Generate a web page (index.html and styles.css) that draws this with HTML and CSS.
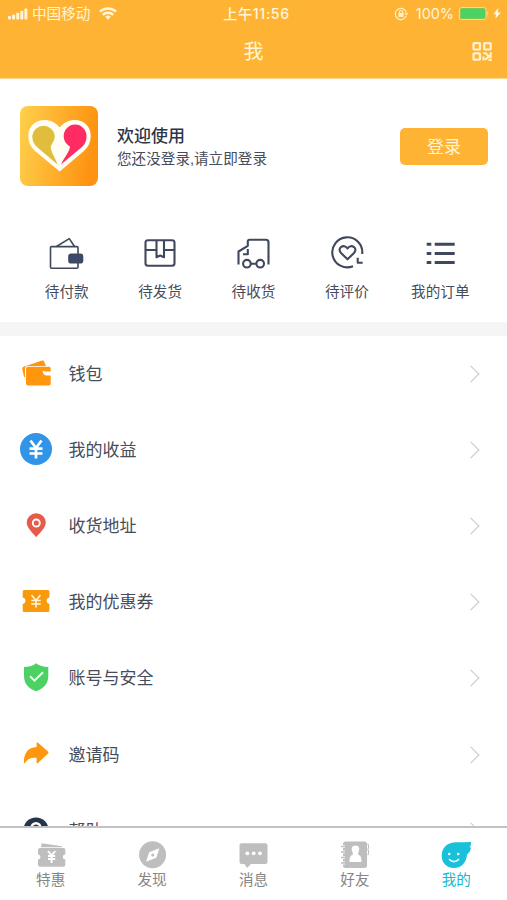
FILE: index.html
```html
<!DOCTYPE html>
<html lang="zh-CN">
<head>
<meta charset="utf-8">
<title>我</title>
<link rel="stylesheet" href="styles.css">
</head>
<body>
<div class="app">
  <header class="header">
    <div class="status">
      <div class="status-left">
        <svg width="20" height="12" viewBox="0 0 20 12" fill="#fff6d8"><rect y="8" width="3" height="3.5" rx="1"/><rect x="4.1" y="6.5" width="3" height="5" rx="1"/><rect x="8.2" y="4.8" width="3" height="6.7" rx="1"/><rect x="12.3" y="2.8" width="3" height="8.7" rx="1"/><rect x="16.4" y="0.5" width="3" height="11" rx="1"/></svg>
        <span class="carrier">中国移动</span>
        <svg width="18" height="13" viewBox="0 0 18 13" fill="none" stroke="#fff6d8" stroke-width="2.5"><path d="M1 4.7a11.5 11.5 0 0 1 16 0M3.8 7.9a7.5 7.5 0 0 1 10.4 0"/><path d="M9 12.8l-2.8-3a4 4 0 0 1 5.6 0z" fill="#fff6d8" stroke="none"/></svg>
      </div>
      <span class="time">上午11:56</span>
      <div class="status-right">
        <svg width="14" height="14" viewBox="0 0 14 14" fill="none" stroke="#fff0c4" stroke-width="1.2"><path d="M12.2 5.2A5.6 5.6 0 1 0 12.2 8.8M10.8 6.3l1.7 1.4 1.1-2"/><rect x="4.4" y="6" width="5.2" height="4" fill="#fff0c4" stroke="none"/><path d="M5.500 6.500V5a1.500 1.500 0 0 1 3 0v1.500"/></svg>
        <span class="percent">100%</span>
        <svg width="30" height="13" viewBox="0 0 30 13"><rect x=".5" y=".5" width="26.500" height="12" rx="2.500" fill="none" stroke="#ffda86"/><rect x="1.300" y="1.300" width="25" height="10.400" rx="1.500" fill="#4cd264"/><path d="M28.200 4.500c1.600.8 1.600 3.200 0 4z" fill="#ffda86"/></svg>
        <svg class="bolt" width="8" height="11" viewBox="0 0 8 11"><path d="M5.300 0L.3 6.200h2.700L2.300 11 7.700 4.500H4.800z" fill="#fff9e8"/></svg>
      </div>
    </div>
    <div class="titlebar">
      <h1>我</h1>
      <svg class="qr" width="20" height="19" viewBox="0 0 20 19" fill="none" stroke="#fff3cf" stroke-width="2.200"><rect x="1.500" y="1.200" width="6.500" height="6.300" rx=".8"/><rect x="12.200" y="1.200" width="6.500" height="6.300" rx=".8"/><rect x="1.500" y="11.400" width="6.500" height="6.300" rx=".8"/><path d="M11.200 11.300h2.600l3.600 4h2.400M18.800 10.300v2.500l-5.600 5M11.500 14.500v4M16.500 18h3.300" stroke-width="2.100"/></svg>
    </div>
  </header>

  <section class="profile">
    <svg width="78" height="80" viewBox="0 0 78 80">
      <defs><linearGradient id="g" x1="0" y1="0" x2="1" y2=".15"><stop offset="0" stop-color="#ffd04c"/><stop offset="1" stop-color="#fd9311"/></linearGradient></defs>
      <rect width="78" height="80" rx="8" fill="url(#g)"/>
      <path d="M39.700 21.500C36 16.500 30.500 14 24.500 14C15 14 8.300 20.500 8.300 29.500C8.300 36.500 10.500 40.500 15 45L39.700 65.500L64 45C68.500 40.500 70.700 36.500 70.700 29.500C70.700 20.500 64 14 55 14C49 14 43.500 16.500 39.700 21.500Z" fill="#fffdf4"/>
      <path d="M37.500 58.500L17 41C13.500 38 12.300 34 12.300 30A11.300 11.300 0 0 1 34.800 30C34.800 34 32.500 36.500 30.700 40.500C30.700 46 35 51 37.500 58.500Z" fill="#e0bd3c"/>
      <path d="M41 58.500L62.500 40.500C65.500 37.500 66.500 34 66.500 30A11.300 11.300 0 0 0 43.700 30C43.700 35 46.500 38.500 50 40.500C49.500 46 44.500 51 41 58.500Z" fill="#ff2b62"/>
    </svg>
    <div class="welcome">
      <strong>欢迎使用</strong>
      <span>您还没登录,请立即登录</span>
    </div>
    <button class="login">登录</button>
  </section>

  <nav class="orders">
    <a class="order"><svg viewBox="0 0 36 36" class="line thin"><rect x="1.500" y="10.600" width="27.500" height="21.700" rx="1"/><path d="M7.500 10.500L20.300 2.600 25.500 10.500"/><rect x="20" y="18.300" width="13.500" height="8.500" rx="2" fill="#3b4a6b"/></svg>待付款</a>
    <a class="order"><svg viewBox="0 0 36 36" class="line"><rect x="3.500" y="4.300" width="29" height="25.500" rx="2.500"/><path d="M3.500 14H14.500M22 14H32.500M14.500 4.500V21.200L18.200 19.500 22 21.200V4.500"/></svg>待发货</a>
    <a class="order"><svg viewBox="0 0 36 36" class="line"><path d="M3.500 28.500V15.500L12.800 9.800V5.500Q12.800 3.800 14.500 3.800H31Q33.500 3.800 33.500 6.500V28.500M12.800 13V18.300H8M15.800 27.700H21.300"/><circle cx="11.900" cy="27.700" r="3.800"/><circle cx="25.200" cy="27.700" r="3.800"/></svg>待收货</a>
    <a class="order"><svg viewBox="0 0 36 36" class="line"><path d="M33.200 18A15 15 0 1 0 24 30.200M28.700 21.700V26.700H33.700"/><path d="M18.500 23.300L12 17C7.500 12 15 7 18.500 12.500C22 7 29.500 12 25 17Z"/></svg>待评价</a>
    <a class="order"><svg viewBox="0 0 36 36" class="line bold"><path d="M4.700 8.200h4.600M12.700 8.200h20M4.700 17.400h4.600M12.700 17.400h20M4.700 26.600h4.600M12.700 26.600h20"/></svg>我的订单</a>
  </nav>

  <main class="menu">
    <a class="row"><svg viewBox="0 0 36 36" fill="#ff960d"><path d="M4.500 14Q3.800 11.500 5 11L24 4.600Q25.500 4.200 26 5.300L28 10H10Q7 10 7 13V21H6Z"/><path d="M10 10.700H31Q32.700 10.700 32.700 12.500V15.500H28Q26 15.500 24.500 14.500Q25 19.500 29 19.500H32.700V27.700Q32.700 29.500 31 29.500H10Q8 29.500 8 27.700V13Q8 10.700 10 10.700Z"/></svg><span>钱包</span><i></i></a>
    <a class="row"><svg viewBox="0 0 36 36"><circle cx="18" cy="17" r="16" fill="#3294e7"/><path d="M12.500 8.500L18 16L23.500 8.500M18 15.500V26.500M11.500 16.700H24.500M11.500 21.500H24.500" fill="none" stroke="#fff" stroke-width="2.700"/></svg><span>我的收益</span><i></i></a>
    <a class="row"><svg viewBox="0 0 36 36"><path d="M18.200 29.200C15 25 8.700 20 8.700 14.500A9.500 9.300 0 0 1 27.800 14.500C27.800 20 21.500 25 18.200 29.200Z" fill="#e65b49"/><circle cx="18.300" cy="15" r="3.500" fill="none" stroke="#fff" stroke-width="1.900"/></svg><span>收货地址</span><i></i></a>
    <a class="row"><svg viewBox="0 0 36 36"><path d="M6.200 5.900H30Q31.400 5.900 31.400 7.400V13.500A3.300 3.300 0 0 0 31.400 20V26.400Q31.400 27.900 30 27.900H6.200Q4.700 27.900 4.700 26.400V20A3.300 3.300 0 0 0 4.700 13.500V7.400Q4.700 5.900 6.200 5.900Z" fill="#f99a0c"/><path d="M13.500 11L18 16.500 22.500 11M18 16.500V23.500M13.300 16.500H22.700M13.300 19.800H22.700" fill="none" stroke="#fff3d5" stroke-width="1.700"/></svg><span>我的优惠券</span><i></i></a>
    <a class="row"><svg viewBox="0 0 36 36"><path d="M18.200 3.200Q23 7 30.300 7V16C30.300 24 25 29 18.200 31.200C11 29 6 24 6 16V7Q13.500 7 18.200 3.200Z" fill="#4cd264"/><path d="M12 16.300L16.500 20.700L25 12.300" fill="none" stroke="#efffed" stroke-width="1.900"/></svg><span>账号与安全</span><i></i></a>
    <a class="row"><svg viewBox="0 0 36 36"><path d="M18.600 6Q18.800 4.800 20 5.700L30 14.500Q31 15.500 30 16.500L20 26Q18.800 26.800 18.600 25.500V20.700C12.500 20.300 9.500 22 7 26Q5.800 27.200 5.900 25C6 16 10 10.500 18.600 10Z" fill="#ff960d"/></svg><span>邀请码</span><i></i></a>
    <a class="row"><svg viewBox="0 0 36 36"><circle cx="18" cy="17" r="12.600" fill="#25344d"/><circle cx="18" cy="14.500" r="4.300" fill="none" stroke="#fff" stroke-width="2.400"/></svg><span>帮助</span><i></i></a>
  </main>

  <footer class="tabs">
    <a class="tab"><svg viewBox="0 0 32 32" fill="#bebebe"><path d="M6.500 4.300L27 7.300V8.300H6Z"/><path d="M5 9H28.500Q30.300 9 30.300 11V15.500A2.500 2.500 0 0 0 30.300 20.500V25.500Q30.300 27.700 28.500 27.700H5Q3 27.700 3 25.500V20.500A2.500 2.500 0 0 0 3 15.500V11Q3 9 5 9Z"/><path d="M13 12L16.600 16.500 20.200 12M16.600 16V24M13 17H20.200M13 20H20.200" fill="none" stroke="#fff" stroke-width="2"/></svg>特惠</a>
    <a class="tab"><svg viewBox="0 0 32 32"><circle cx="16.600" cy="15.700" r="13.500" fill="#bebebe"/><path d="M23.300 9.200L20.300 18.800L10 22.800L13.200 13.200Z" fill="#fff"/><circle cx="16.700" cy="16" r="1.500" fill="#bebebe"/></svg>发现</a>
    <a class="tab"><svg viewBox="0 0 32 32"><path d="M4.500 4.300H28.500Q30.500 4.300 30.500 6.300V23Q30.500 25 28.500 25H14L10 29 7.500 25H4.500Q2.500 25 2.500 23V6.300Q2.500 4.300 4.500 4.300Z" fill="#bebebe"/><g fill="#fff"><circle cx="10.300" cy="14.300" r="1.900"/><circle cx="16.700" cy="14.300" r="1.900"/><circle cx="23" cy="14.300" r="1.900"/></g></svg>消息</a>
    <a class="tab"><svg viewBox="0 0 32 32"><rect x="4" y="2.400" width="24" height="26.600" rx="2.500" fill="#bebebe"/><path d="M2 7.500h4M2 13h4M2 18.500h4M2 24h4" stroke="#fff" stroke-width="2.800"/><path d="M2 7.500h4M2 13h4M2 18.500h4M2 24h4" stroke="#bebebe" stroke-width="1.300"/><path d="M28.300 5.500h1.200v4.300h-1.200M28.300 11h1.200v4.500h-1.200" fill="none" stroke="#bebebe"/><path d="M16.500 6.500C20.500 6.500 21 10 19.500 13L19 15.500C22 16.500 22.500 18.500 22.500 23H10.500C10.500 18.500 11 16.500 14 15.500L13.500 13C12 10 12.500 6.500 16.500 6.500Z" fill="#fff"/></svg>好友</a>
    <a class="tab active"><svg viewBox="0 0 32 32"><path d="M31 3Q31.500 6 29.500 8.500L31 8.300Q30.500 13 27 15.500C26.500 23 22 29 14 29C6 29 1.700 23 1.700 17C1.700 8 8 3.500 16 3.300C21 3.100 26 3.300 31 3Z" fill="#18c0d9"/><g fill="#fff"><circle cx="9.200" cy="15" r="1.300"/><circle cx="18.200" cy="15" r="1.300"/></g><path d="M9.500 20.500Q14 24.800 18.500 20.500" fill="none" stroke="#fff" stroke-width="1.700" stroke-linecap="round"/></svg>我的</a>
  </footer>
</div>
</body>
</html>
```
FILE: styles.css
```css
* { box-sizing: border-box; }
body {
  margin: 0;
  background: #fff;
  color: #464c5a;
  font-family: "Liberation Sans", "Noto Sans CJK SC", sans-serif;
}
svg { display: block; flex: none; }
.app {
  width: 507px;
  height: 900px;
  display: flex;
  flex-direction: column;
  overflow: hidden;
}
.header {
  flex: none;
  height: 79px;
  background: #ffb334;
  border-bottom: 1px solid #ffd78d;
  color: #fff6d8;
}
.status {
  height: 27px;
  padding: 0 6px 0 8px;
  display: grid;
  grid-template-columns: 1fr auto 1fr;
  align-items: center;
  line-height: 20px;
}
.status-left, .status-right { display: flex; align-items: center; }
.status-right { justify-content: flex-end; }
.carrier { font-size: 14.6px; margin: 0 9px 0 4px; }
.time { font: 500 14.2px/20px Inter, "Noto Sans CJK SC", sans-serif; letter-spacing: .65px; padding-left: 4px; }
.percent { font: 14.4px/20px Inter, sans-serif; margin: 0 5px 0 8px; }
.bolt { margin-left: 4px; }
.titlebar {
  height: 49px;
  padding: 0 15px;
  display: grid;
  grid-template-columns: 1fr auto 1fr;
  align-items: center;
}
h1 { grid-column: 2; margin: 0; font-size: 20px; line-height: 28px; font-weight: 400; }
.qr { justify-self: end; }
.profile {
  flex: none;
  height: 134px;
  padding: 0 19px 0 20px;
  display: flex;
  align-items: center;
}
.welcome { flex: 1; margin: 2px 0 0 19px; display: flex; flex-direction: column; }
.welcome strong { font-size: 17px; line-height: 24px; font-weight: 500; color: #2d3549; }
.welcome span { font-size: 14.6px; line-height: 21px; }
.login {
  width: 88px;
  height: 37px;
  border: 0;
  border-radius: 5px;
  background: #ffb334;
  color: #fff6d8;
  font: 17px/24px "Noto Sans CJK SC", sans-serif;
}
.orders {
  flex: none;
  height: 109px;
  padding: 23px 20px 0;
  display: grid;
  grid-template-columns: repeat(5, 1fr);
}
.order {
  display: flex;
  flex-direction: column;
  align-items: center;
  gap: 9px;
  font-size: 14.6px;
  line-height: 22px;
}
.order svg { width: 36px; height: 36px; }
.line { fill: none; stroke: #3f485c; stroke-width: 2.1; stroke-linejoin: round; }
.thin { stroke-width: 1.6; }
.bold { stroke-width: 3; }
.menu {
  flex: 1;
  min-height: 0;
  overflow: hidden;
  border-top: 14px solid #f5f5f5;
}
.row {
  height: 76.1px;
  padding: 0 30px 0 18px;
  display: flex;
  align-items: center;
}
.row svg { width: 36px; height: 36px; }
.row span { flex: 1; margin-left: 14.5px; padding-top: 2px; font-size: 17px; line-height: 24px; }
.row i {
  width: 12px;
  height: 12px;
  border: solid #c8c8c8;
  border-width: 1.5px 1.5px 0 0;
  transform: rotate(45deg);
}
.tabs {
  flex: none;
  height: 74px;
  padding-top: 11px;
  border-top: 2px solid #c2c2c2;
  display: grid;
  grid-template-columns: repeat(5, 1fr);
}
.tab {
  display: flex;
  flex-direction: column;
  align-items: center;
  font-size: 14.6px;
  line-height: 18px;
  color: #858585;
}
.tab svg { width: 32px; height: 32px; }
.tab.active { color: #18b8ce; }
```
